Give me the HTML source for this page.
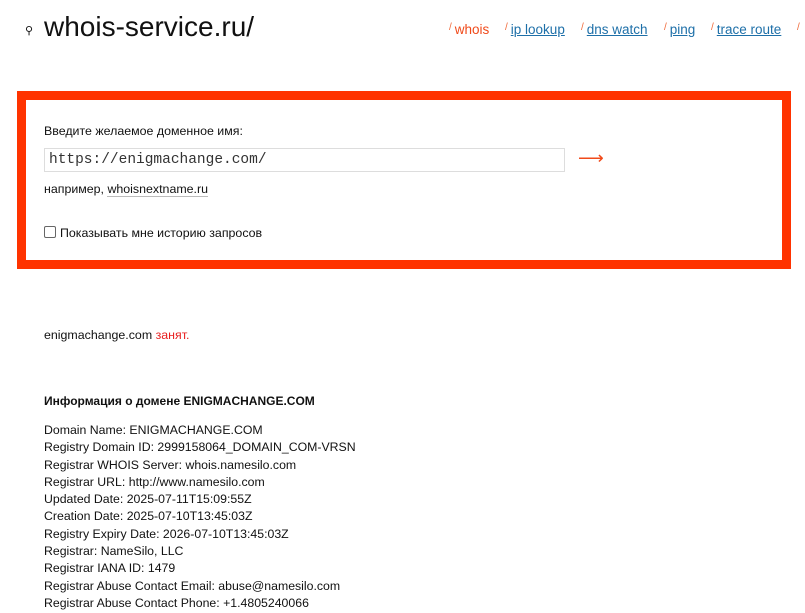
<!DOCTYPE html>
<html><head><meta charset="utf-8"><style>
body{margin:0;background:#fff;font-family:"Liberation Sans",sans-serif;color:#111;width:805px;height:613px;overflow:hidden;position:relative}
.a{position:absolute;white-space:nowrap}
.title{left:44px;top:11px;font-size:28px;color:#111}
.mag{left:25px;top:24px;font-size:11px}
.nav{top:22px;font-size:13.5px}
.nav a{color:#1d6fa8;text-decoration:underline}
.nav .s{color:#f06a3a;font-size:10px;vertical-align:top;margin-right:3px}
.box{left:17px;top:91px;width:756px;height:160px;border:9px solid #ff3300}
.t13{font-size:12.4px}
.inp{left:44px;top:148px;width:521px;height:24px;border:1px solid #ddd;box-sizing:border-box;font-family:"Liberation Mono",monospace;font-size:14.5px;padding:3px 4px;color:#333}
.info{left:44px;top:422px;font-size:12.3px;line-height:17.3px}
</style></head><body>
<div class="a mag">⚲</div>
<div class="a title">whois-service.ru/</div>
<div class="a nav" style="left:449px"><span class="s">/</span><span style="color:#f04a1a">whois</span></div>
<div class="a nav" style="left:505px"><span class="s">/</span><a>ip lookup</a></div>
<div class="a nav" style="left:581px"><span class="s">/</span><a>dns watch</a></div>
<div class="a nav" style="left:664px"><span class="s">/</span><a>ping</a></div>
<div class="a nav" style="left:711px"><span class="s">/</span><a>trace route</a></div>
<div class="a nav" style="left:797px"><span class="s">/</span></div>
<div class="a box"></div>
<div class="a t13" style="left:44px;top:124px">Введите желаемое доменное имя:</div>
<div class="a inp">https://enigmachange.com/</div>
<div class="a" style="left:578px;top:148px;color:#f04a1a;font-size:18px">⟶</div>
<div class="a t13" style="left:44px;top:182px">например, <span style="border-bottom:1px solid #bbb">whoisnextname.ru</span></div>
<div class="a t13" style="left:44px;top:226px"><span style="display:inline-block;width:10px;height:10px;border:1px solid #666;border-radius:2px;vertical-align:-1px;margin-right:4px"></span>Показывать мне историю запросов</div>
<div class="a t13" style="left:44px;top:328px">enigmachange.com <span style="color:#e82020">занят.</span></div>
<div class="a t13" style="left:44px;top:394px;font-weight:bold;font-size:12px">Информация о домене ENIGMACHANGE.COM</div>
<div class="a info">Domain Name: ENIGMACHANGE.COM<br>Registry Domain ID: 2999158064_DOMAIN_COM-VRSN<br>Registrar WHOIS Server: whois.namesilo.com<br>Registrar URL: http://www.namesilo.com<br>Updated Date: 2025-07-11T15:09:55Z<br>Creation Date: 2025-07-10T13:45:03Z<br>Registry Expiry Date: 2026-07-10T13:45:03Z<br>Registrar: NameSilo, LLC<br>Registrar IANA ID: 1479<br>Registrar Abuse Contact Email: abuse@namesilo.com<br>Registrar Abuse Contact Phone: +1.4805240066</div>
</body></html>
